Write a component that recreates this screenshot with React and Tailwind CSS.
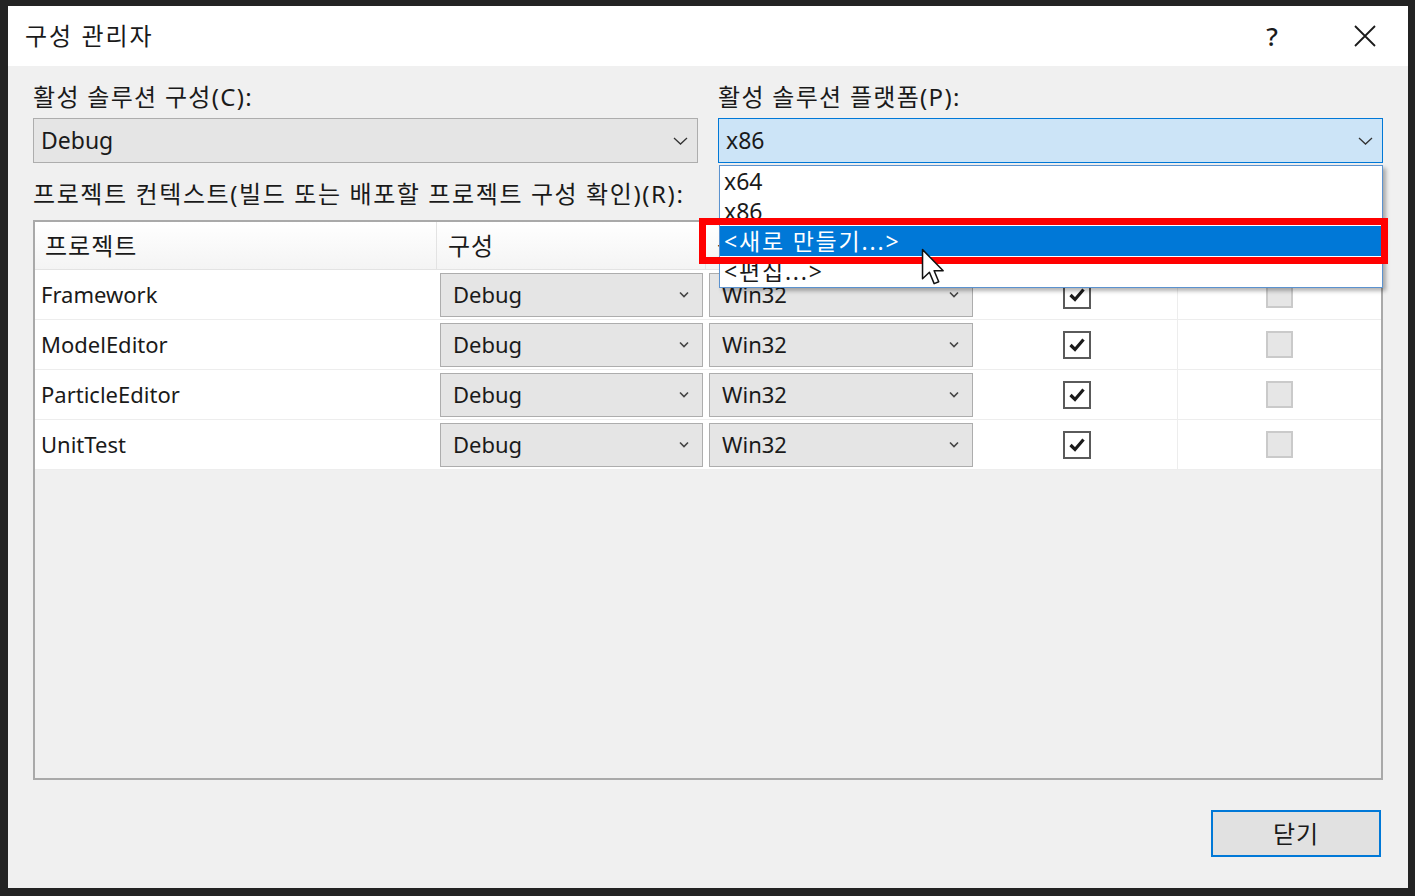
import React from "react";

const FONT = { fontFamily: '"Noto Sans", "Noto Sans CJK KR", sans-serif' };

function Chevron({ w = 15, h = 8, color = "#333" }) {
  return (
    <svg width={w} height={h} viewBox="0 0 15 8" fill="none">
      <path d="M1 1 L7.5 7 L14 1" stroke={color} strokeWidth="1.3" />
    </svg>
  );
}

function SmallChevron() {
  return (
    <svg width="10" height="7" viewBox="0 0 10 7" fill="none">
      <path d="M1 1.5 L5 5.5 L9 1.5" stroke="#444" strokeWidth="1.6" />
    </svg>
  );
}

function SmallCombo({ text }) {
  return (
    <div className="h-[44px] w-full flex items-center justify-between pl-[12px] pr-[13px] bg-[#e5e5e5] border border-[#adadad]">
      <span className="text-[22px] text-[#1a1a1a]">{text}</span>
      <SmallChevron />
    </div>
  );
}

function CheckOn() {
  return (
    <div className="w-[28px] h-[28px] border-2 border-[#5a5a5a] bg-white flex items-center justify-center">
      <svg width="18" height="16" viewBox="0 0 18 16">
        <path d="M2.5 8 L7 12.5 L15.5 2.5" stroke="#1a1a1a" strokeWidth="3.2" fill="none" />
      </svg>
    </div>
  );
}

function CheckOff() {
  return <div className="w-[27px] h-[27px] border-2 border-[#cacaca] bg-[#e6e6e6]" />;
}

const rows = ["Framework", "ModelEditor", "ParticleEditor", "UnitTest"];

export default function App() {
  return (
    <div className="w-[1415px] h-[896px] bg-[#232323] pt-[6px] pl-[8px]" style={FONT}>
      <div className="relative w-[1400px] h-[882px] flex flex-col bg-[#f0f0f0] text-[#1a1a1a]">
        {/* title bar */}
        <div className="h-[60px] bg-white flex items-center pl-[17px] pr-[32px]">
          <span className="text-[24px] tracking-[2px] flex-1">구성 관리자</span>
          <span className="text-[26px] font-medium w-[30px] text-center mr-[67px]">?</span>
          <svg width="22" height="22" viewBox="0 0 22 22">
            <path d="M1 1 L21 21 M21 1 L1 21" stroke="#1a1a1a" strokeWidth="1.8" />
          </svg>
        </div>

        {/* body */}
        <div className="flex-1 flex flex-col px-[25px] pt-[16px]">
          <div className="grid grid-cols-2 gap-x-[20px]">
            <div className="flex flex-col">
              <div className="h-[30px] flex items-center text-[24px] tracking-[1.3px]">활성 솔루션 구성(C):</div>
              <div className="mt-[6px] h-[45px] flex items-center justify-between pl-[7px] pr-[9px] bg-[#e5e5e5] border border-[#adadad]">
                <span className="text-[23px]">Debug</span>
                <Chevron />
              </div>
            </div>
            <div className="flex flex-col">
              <div className="h-[30px] flex items-center text-[24px] tracking-[1.3px]">활성 솔루션 플랫폼(P):</div>
              <div className="mt-[6px] h-[45px] flex items-center justify-between pl-[7px] pr-[9px] bg-[#cce4f7] border border-[#0078d7]">
                <span className="text-[23px]">x86</span>
                <Chevron />
              </div>
            </div>
          </div>

          <div className="mt-[16px] h-[30px] flex items-center text-[24px] tracking-[1.6px]">
            프로젝트 컨텍스트(빌드 또는 배포할 프로젝트 구성 확인)(R):
          </div>

          {/* table */}
          <div className="mt-[11px] h-[560px] border-2 border-[#a9a9a9] bg-[#f0f0f0] flex flex-col">
            <div className="h-[48px] flex bg-gradient-to-b from-white to-[#f4f4f4] border-b border-[#e3e3e3] text-[24px] tracking-[1px]">
              <div className="w-[402px] pl-[10px] flex items-center border-r border-[#e3e3e3]">프로젝트</div>
              <div className="w-[269px] pl-[11px] flex items-center border-r border-[#e3e3e3]">구성</div>
              <div className="w-[270px] pl-[11px] flex items-center border-r border-[#e3e3e3]">플랫폼</div>
              <div className="w-[202px] pl-[11px] flex items-center border-r border-[#e3e3e3]">빌드</div>
              <div className="flex-1 pl-[11px] flex items-center">배포</div>
            </div>
            {rows.map((r) => (
              <div key={r} className="h-[50px] flex bg-white border-b border-[#ededed]">
                <div className="w-[402px] pl-[6px] flex items-center text-[22px]">{r}</div>
                <div className="w-[269px] px-[3px] flex items-center">
                  <SmallCombo text="Debug" />
                </div>
                <div className="w-[270px] px-[3px] flex items-center">
                  <SmallCombo text="Win32" />
                </div>
                <div className="w-[202px] flex items-center justify-center border-r border-[#ededed]">
                  <CheckOn />
                </div>
                <div className="flex-1 flex items-center justify-center">
                  <CheckOff />
                </div>
              </div>
            ))}
          </div>

          <div className="mt-[30px] flex justify-end pr-[2px]">
            <div className="w-[170px] h-[47px] border-2 border-[#0078d7] bg-[#e1e1e1] flex items-center justify-center text-[24px] tracking-[1px]">
              닫기
            </div>
          </div>
        </div>

        {/* dropdown list */}
        <div className="absolute left-[711px] top-[159px] w-[664px] h-[123px] bg-white border border-[#5b92cf] shadow-[3px_3px_4px_rgba(0,0,0,0.3)] flex flex-col text-[23px]">
          <div className="h-[30px] flex items-center pl-[4px]">x64</div>
          <div className="h-[30px] flex items-center pl-[4px]">x86</div>
          <div className="h-[30px] flex items-center pl-[4px] bg-[#0078d7] text-white tracking-[1.8px]">&lt;새로 만들기...&gt;</div>
          <div className="h-[30px] flex items-center pl-[4px] tracking-[1.8px]">&lt;편집...&gt;</div>
        </div>

        {/* red highlight box */}
        <div className="absolute left-[691px] top-[212px] w-[689px] h-[46px] border-[7px] border-[#ff0000]" />

        {/* mouse cursor */}
        <svg className="absolute left-[913px] top-[242px]" width="26" height="40" viewBox="0 0 17 26">
          <path d="M1 1 L1 20 L5.5 15.8 L8.6 23.2 L11.6 22 L8.6 14.8 L14.5 14.8 Z" fill="white" stroke="#111" strokeWidth="1" strokeLinejoin="round" />
        </svg>
      </div>
    </div>
  );
}
